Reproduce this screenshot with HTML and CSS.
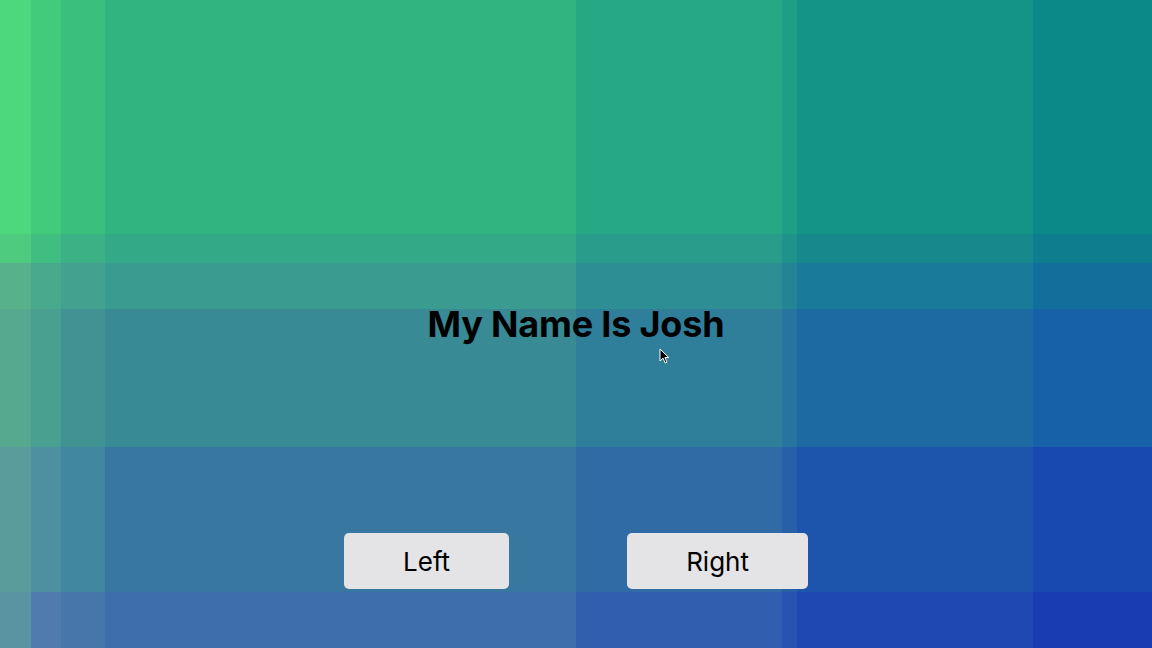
FILE: index.html
```html
<!DOCTYPE html>
<html lang="en">
<head>
<meta charset="utf-8">
<title>My Name Is Josh</title>
<link rel="stylesheet" href="styles.css">
</head>
<body>
<div class="page">
  <div class="backdrop" aria-hidden="true">
    <i></i><i></i><i></i><i></i><i></i><i></i><i></i><i></i>
    <i></i><i></i><i></i><i></i><i></i><i></i><i></i><i></i>
    <i></i><i></i><i></i><i></i><i></i><i></i><i></i><i></i>
    <i></i><i></i><i></i><i></i><i></i><i></i><i></i><i></i>
    <i></i><i></i><i></i><i></i><i></i><i></i><i></i><i></i>
    <i></i><i></i><i></i><i></i><i></i><i></i><i></i><i></i>
  </div>
  <main class="content">
    <h1 class="title">My Name Is Josh</h1>
    <div class="actions">
      <button class="btn btn-left" type="button">Left</button>
      <button class="btn btn-right" type="button">Right</button>
    </div>
  </main>
  <svg class="cursor" width="12" height="17" viewBox="0 0 12 17" aria-hidden="true">
    <path d="M1 1 L1 13 L4 10.2 L6.2 15 L8 14.2 L5.9 9.6 L9.8 9.6 Z" fill="#000" stroke="#fff" stroke-width="1"/>
  </svg>
</div>
</body>
</html>
```
FILE: styles.css
```css
html, body {
  margin: 0;
  padding: 0;
}
body {
  font-family: Inter, "Noto Sans", "Liberation Sans", sans-serif;
  color: #000;
}
.page {
  position: relative;
  width: 1152px;
  height: 648px;
  overflow: hidden;
  display: grid;
}
.backdrop,
.content {
  grid-area: 1 / 1;
}
.backdrop {
  display: grid;
  grid-template-columns: 31px 30px 44px 471px 206px 15px 236px 119px;
  grid-template-rows: 234px 29px 46px 138px 145px 56px;
}
.backdrop i { display: block; }
/* row 0 */
.backdrop i:nth-child(1) { background: #4dd87d; }
.backdrop i:nth-child(2) { background: #42cb7b; }
.backdrop i:nth-child(3) { background: #3abf7d; }
.backdrop i:nth-child(4) { background: #31b47f; }
.backdrop i:nth-child(5) { background: #27a884; }
.backdrop i:nth-child(6) { background: #1e9e85; }
.backdrop i:nth-child(7) { background: #149487; }
.backdrop i:nth-child(8) { background: #0b8888; }
/* row 1 */
.backdrop i:nth-child(9) { background: #4fcb7f; }
.backdrop i:nth-child(10) { background: #40be81; }
.backdrop i:nth-child(11) { background: #3cb185; }
.backdrop i:nth-child(12) { background: #34a987; }
.backdrop i:nth-child(13) { background: #2a9c8b; }
.backdrop i:nth-child(14) { background: #20928c; }
.backdrop i:nth-child(15) { background: #17898d; }
.backdrop i:nth-child(16) { background: #0e7e8f; }
/* row 2 */
.backdrop i:nth-child(17) { background: #57b28c; }
.backdrop i:nth-child(18) { background: #48a98c; }
.backdrop i:nth-child(19) { background: #42a28f; }
.backdrop i:nth-child(20) { background: #3a9b91; }
.backdrop i:nth-child(21) { background: #2d8e94; }
.backdrop i:nth-child(22) { background: #238496; }
.backdrop i:nth-child(23) { background: #1a7a99; }
.backdrop i:nth-child(24) { background: #126f9c; }
/* row 3 */
.backdrop i:nth-child(25) { background: #56a98f; }
.backdrop i:nth-child(26) { background: #4aa090; }
.backdrop i:nth-child(27) { background: #409392; }
.backdrop i:nth-child(28) { background: #388a95; }
.backdrop i:nth-child(29) { background: #2f7f9b; }
.backdrop i:nth-child(30) { background: #26749f; }
.backdrop i:nth-child(31) { background: #1d6aa3; }
.backdrop i:nth-child(32) { background: #1661a7; }
/* row 4 */
.backdrop i:nth-child(33) { background: #5a9c9b; }
.backdrop i:nth-child(34) { background: #4e8fa0; }
.backdrop i:nth-child(35) { background: #4287a0; }
.backdrop i:nth-child(36) { background: #3777a0; }
.backdrop i:nth-child(37) { background: #306ba5; }
.backdrop i:nth-child(38) { background: #2760a8; }
.backdrop i:nth-child(39) { background: #1e55ac; }
.backdrop i:nth-child(40) { background: #1749b1; }
/* row 5 */
.backdrop i:nth-child(41) { background: #5a94a2; }
.backdrop i:nth-child(42) { background: #4f7bae; }
.backdrop i:nth-child(43) { background: #4676aa; }
.backdrop i:nth-child(44) { background: #3e6eab; }
.backdrop i:nth-child(45) { background: #325eb0; }
.backdrop i:nth-child(46) { background: #2953b1; }
.backdrop i:nth-child(47) { background: #2048b2; }
.backdrop i:nth-child(48) { background: #1a3cb2; }

.content {
  display: flex;
  flex-direction: column;
  align-items: center;
  padding-top: 302px;
  z-index: 1;
}
.title {
  margin: 0;
  font-size: 36px;
  font-weight: 700;
  line-height: 44px;
  letter-spacing: -0.2px;
}
.actions {
  display: flex;
  gap: 118px;
  margin-top: 187px;
}
.btn {
  height: 56px;
  padding: 0 59px;
  border: 0;
  border-radius: 5px;
  background: #e4e3e5;
  color: #000;
  font-family: inherit;
  font-size: 26px;
  font-weight: 400;
}
.cursor {
  position: absolute;
  left: 659px;
  top: 348px;
  z-index: 2;
}
```
